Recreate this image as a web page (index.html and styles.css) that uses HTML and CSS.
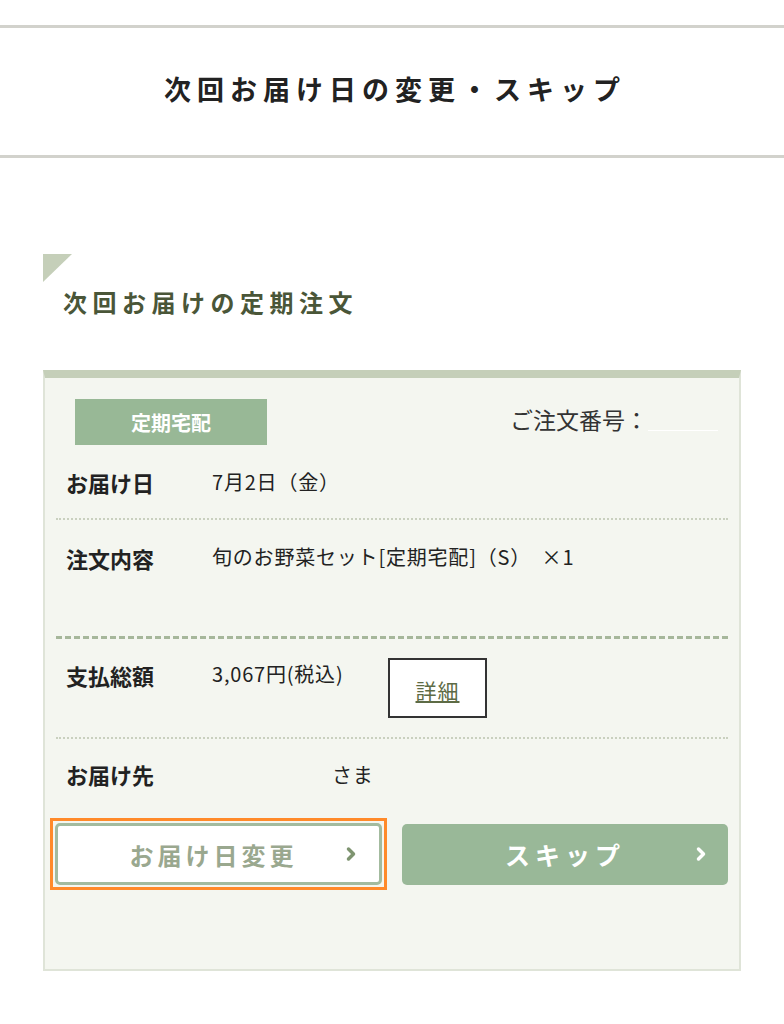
FILE: index.html
```html
<!DOCTYPE html>
<html lang="ja">
<head>
  <meta charset="utf-8">
  <title>次回お届け日の変更・スキップ</title>
  <link rel="stylesheet" href="styles.css">
</head>
<body>
  <!-- ページタイトル -->
  <header class="page-head">
    <h1>次回お届け日の変更・スキップ</h1>
  </header>

  <main class="content">
    <!-- 見出し -->
    <h2 class="section-title">次回お届けの定期注文</h2>

    <!-- 注文カード -->
    <div class="order-card">
      <div class="card-top">
        <span class="badge">定期宅配</span>
        <span class="order-no">ご注文番号：<span class="blank"></span></span>
      </div>

      <div class="row sep-dot">
        <span class="row-label">お届け日</span>
        <span class="row-value">7月2日（金）</span>
      </div>

      <div class="row row-tall sep-dash">
        <span class="row-label">注文内容</span>
        <span class="row-value">旬のお野菜セット[定期宅配]（S）&nbsp;&nbsp;×1</span>
      </div>

      <div class="row row-pay sep-dot">
        <span class="row-label">支払総額</span>
        <span class="row-value">3,067円(税込)</span>
        <a class="detail-btn" href="#">詳細</a>
      </div>

      <div class="row row-last">
        <span class="row-label">お届け先</span>
        <span class="row-value name">さま</span>
      </div>

      <div class="actions">
        <div class="focus-ring">
          <a class="btn btn-outline" href="#">お届け日変更
            <svg class="chev" viewBox="0 0 10 16"><polyline points="2.5,3 7.5,8 2.5,13"/></svg>
          </a>
        </div>
        <a class="btn btn-fill" href="#">スキップ
          <svg class="chev" viewBox="0 0 10 16"><polyline points="2.5,3 7.5,8 2.5,13"/></svg>
        </a>
      </div>
    </div>
  </main>
</body>
</html>
```

FILE: styles.css
```css
/* ベース */
body {
  margin: 0;
  padding: 0;
  background: #fff;
  color: #222;
  font-family: "Noto Sans CJK JP", "Noto Sans", sans-serif;
}

/* ページタイトル */
.page-head {
  margin-top: 25px;
  height: 127px;
  border-top: 3px solid #d2d2cc;
  border-bottom: 3px solid #d2d2cc;
  display: flex;
  align-items: center;
  justify-content: center;
}
.page-head h1 {
  margin: 0 0 6px 0;
  font-size: 27px;
  font-weight: bold;
  letter-spacing: 6px;
  color: #222;
  padding-left: 6px;
}

/* 中身 */
.content {
  padding: 96px 43px 0 43px;
}

/* 見出し（左上に三角） */
.section-title {
  position: relative;
  margin: 0 0 51px 0;
  padding: 30px 0 0 20px;
  font-size: 24px;
  font-weight: bold;
  letter-spacing: 5.5px;
  color: #4a5638;
}
.section-title::before {
  content: "";
  position: absolute;
  left: 0;
  top: 0;
  width: 0;
  height: 0;
  border-top: 28px solid #c5cfb9;
  border-right: 29px solid transparent;
}

/* カード */
.order-card {
  width: 698px;
  box-sizing: border-box;
  height: 601px;
  background: #f4f6f0;
  border: 2px solid #dfe4d8;
  border-top: 8px solid #c5cfb9;
  padding: 0 11px;
}

.card-top {
  display: flex;
  justify-content: space-between;
  align-items: flex-start;
  padding: 21px 10px 0 19px;
}
.badge {
  display: flex;
  align-items: center;
  justify-content: center;
  width: 192px;
  height: 46px;
  background: #98b896;
  color: #fff;
  font-weight: bold;
  font-size: 20px;
}
.order-no {
  font-size: 23px;
  color: #333;
  padding-top: 3px;
  display: flex;
  align-items: center;
}
.order-no .blank {
  display: inline-block;
  width: 70px;
  height: 22px;
  border-bottom: 1px solid #fff;
}

/* 行 */
.row {
  display: flex;
  align-items: center;
  height: 73px;
  padding-left: 10px;
}
.row-label {
  width: 146px;
  font-size: 22px;
  font-weight: bold;
  color: #222;
}
.row-value {
  font-size: 20px;
  letter-spacing: 0.8px;
  color: #222;
}
.sep-dot {
  border-bottom: 2px dotted #c9d0bf;
}
.sep-dash {
  border-bottom: 3px dashed #a6b79b;
}
.row-tall {
  height: 119px;
  align-items: flex-start;
  padding-top: 22px;
  box-sizing: border-box;
}
.row-pay {
  height: 100px;
  align-items: flex-start;
  padding-top: 20px;
  box-sizing: border-box;
}
.row-pay .row-value {
  width: 176px;
}
.detail-btn {
  margin-top: -1px;
  width: 99px;
  height: 60px;
  box-sizing: border-box;
  border: 2px solid #333;
  background: #fff;
  display: flex;
  align-items: center;
  justify-content: center;
  color: #5d6b45;
  font-size: 21px;
  letter-spacing: 1px;
  text-decoration: underline;
  padding-top: 3px;
}
.row-last {
  height: 70px;
}
.name {
  padding-left: 120px;
}

/* ボタン */
.actions {
  display: flex;
  justify-content: space-between;
  align-items: center;
  margin-top: 9px;
}
.focus-ring {
  border: 3px solid #ff8a2a;
  padding: 2px;
  margin-left: -6px;
}
.btn {
  position: relative;
  display: flex;
  align-items: center;
  justify-content: center;
  box-sizing: border-box;
  width: 326px;
  height: 61px;
  border-radius: 5px;
  font-size: 24px;
  font-weight: bold;
  letter-spacing: 4px;
  text-decoration: none;
}
.btn-outline {
  background: #fff;
  border: 3px solid #a3bb9f;
  color: #9aa88f;
  width: 327px;
  height: 62px;
  padding-right: 10px;
}
.btn-fill {
  background: #99b898;
  color: #fff;
  font-size: 25px;
  letter-spacing: 5px;
}
.chev {
  position: absolute;
  right: 22px;
  top: 50%;
  width: 10px;
  height: 16px;
  margin-top: -8px;
  fill: none;
  stroke: #fff;
  stroke-width: 3.5;
  stroke-linecap: round;
  stroke-linejoin: round;
}
.btn-outline .chev {
  stroke: #7e9470;
  right: 23px;
}
```
